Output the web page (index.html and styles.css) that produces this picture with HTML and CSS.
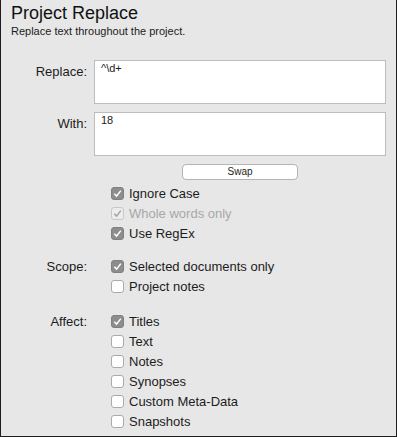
FILE: index.html
```html
<!DOCTYPE html>
<html lang="en">
<head>
  <meta charset="UTF-8">
  <meta name="viewport" content="width=device-width, initial-scale=1.0">
  <title>Project Replace</title>
  <link rel="stylesheet" href="styles.css">
</head>
<body>
  <div class="panel">
    <header>
      <h1>Project Replace</h1>
      <p class="subtitle">Replace text throughout the project.</p>
    </header>

    <div class="field">
      <label class="label">Replace:</label>
      <div class="textbox">^\d+</div>
    </div>
    <div class="field">
      <label class="label">With:</label>
      <div class="textbox">18</div>
    </div>

    <div class="swap-row">
      <button class="swap">Swap</button>
    </div>

    <!-- options -->
    <div class="section first">
      <div class="label"></div>
      <div class="checks">
        <div class="check"><span class="box on"><svg viewBox="0 0 11 11"><path d="M2.3 5.7 L4.6 8.1 L8.8 2.6"/></svg></span>Ignore Case</div>
        <div class="check disabled"><span class="box dim"><svg viewBox="0 0 11 11"><path d="M2.3 5.7 L4.6 8.1 L8.8 2.6"/></svg></span>Whole words only</div>
        <div class="check"><span class="box on"><svg viewBox="0 0 11 11"><path d="M2.3 5.7 L4.6 8.1 L8.8 2.6"/></svg></span>Use RegEx</div>
      </div>
    </div>

    <div class="section scope">
      <div class="label">Scope:</div>
      <div class="checks">
        <div class="check"><span class="box on"><svg viewBox="0 0 11 11"><path d="M2.3 5.7 L4.6 8.1 L8.8 2.6"/></svg></span>Selected documents only</div>
        <div class="check"><span class="box"></span>Project notes</div>
      </div>
    </div>

    <div class="section affect">
      <div class="label">Affect:</div>
      <div class="checks">
        <div class="check"><span class="box on"><svg viewBox="0 0 11 11"><path d="M2.3 5.7 L4.6 8.1 L8.8 2.6"/></svg></span>Titles</div>
        <div class="check"><span class="box"></span>Text</div>
        <div class="check"><span class="box"></span>Notes</div>
        <div class="check"><span class="box"></span>Synopses</div>
        <div class="check"><span class="box"></span>Custom Meta-Data</div>
        <div class="check"><span class="box"></span>Snapshots</div>
      </div>
    </div>
  </div>
</body>
</html>
```

FILE: styles.css
```css
body {
  margin: 0;
  font-family: "Liberation Sans", Arial, sans-serif;
  color: #1c1c1c;
}
.panel {
  width: 397px;
  height: 437px;
  box-sizing: border-box;
  background: #e7e7e7;
  border: 1px solid #1e1e1e;
  border-top: none;
  padding-left: 10px;
  overflow: hidden;
}
header {
  padding-top: 3px;
}
h1 {
  margin: 0;
  font-size: 18px;
  font-weight: normal;
  line-height: 20px;
  color: #111;
}
.subtitle {
  margin: 2px 0 0;
  font-size: 11px;
  line-height: 13px;
}
.field {
  display: flex;
  gap: 7px;
  margin-top: 8px;
}
header + .field {
  margin-top: 22px;
}
.label {
  width: 76px;
  flex: none;
  text-align: right;
  font-size: 13px;
  line-height: 20px;
}
.field .label {
  padding-top: 2px;
}
.textbox {
  width: 292px;
  height: 44px;
  box-sizing: border-box;
  background: #fff;
  border: 1px solid #bdbdbd;
  padding: 1px 6px;
  font-size: 11px;
  line-height: 13px;
}
.swap-row {
  display: flex;
  justify-content: center;
  width: 292px;
  margin: 8px 0 0 83px;
}
.swap {
  width: 116px;
  height: 16px;
  padding: 0;
  background: #fff;
  border: 1px solid #b4b4b4;
  border-radius: 4px;
  font-family: "Liberation Sans", Arial, sans-serif;
  font-size: 10px;
  line-height: 14px;
  color: #222;
}
.section {
  display: flex;
  gap: 7px;
}
.section.first {
  margin-top: 4px;
}
.section.scope {
  margin-top: 13px;
}
.section.affect {
  margin-top: 15px;
}
.checks {
  padding-left: 17px;
}
.check {
  display: flex;
  align-items: flex-start;
  height: 20px;
  font-size: 13px;
  line-height: 20px;
}
.check.disabled {
  color: #a8a8a8;
}
.box {
  width: 13px;
  height: 13px;
  box-sizing: border-box;
  margin: 3px 5px 0 0;
  background: #fff;
  border: 1px solid #ababab;
  border-radius: 3px;
  flex: none;
}
.box svg {
  display: block;
  width: 11px;
  height: 11px;
  fill: none;
  stroke-width: 1.5;
}
.box.on {
  background: #8d8d8d;
  border-color: #808080;
}
.box.on svg {
  stroke: #fff;
}
.box.dim {
  background: #ececec;
  border-color: #c8c8c8;
}
.box.dim svg {
  stroke: #a3a3a3;
}
```
